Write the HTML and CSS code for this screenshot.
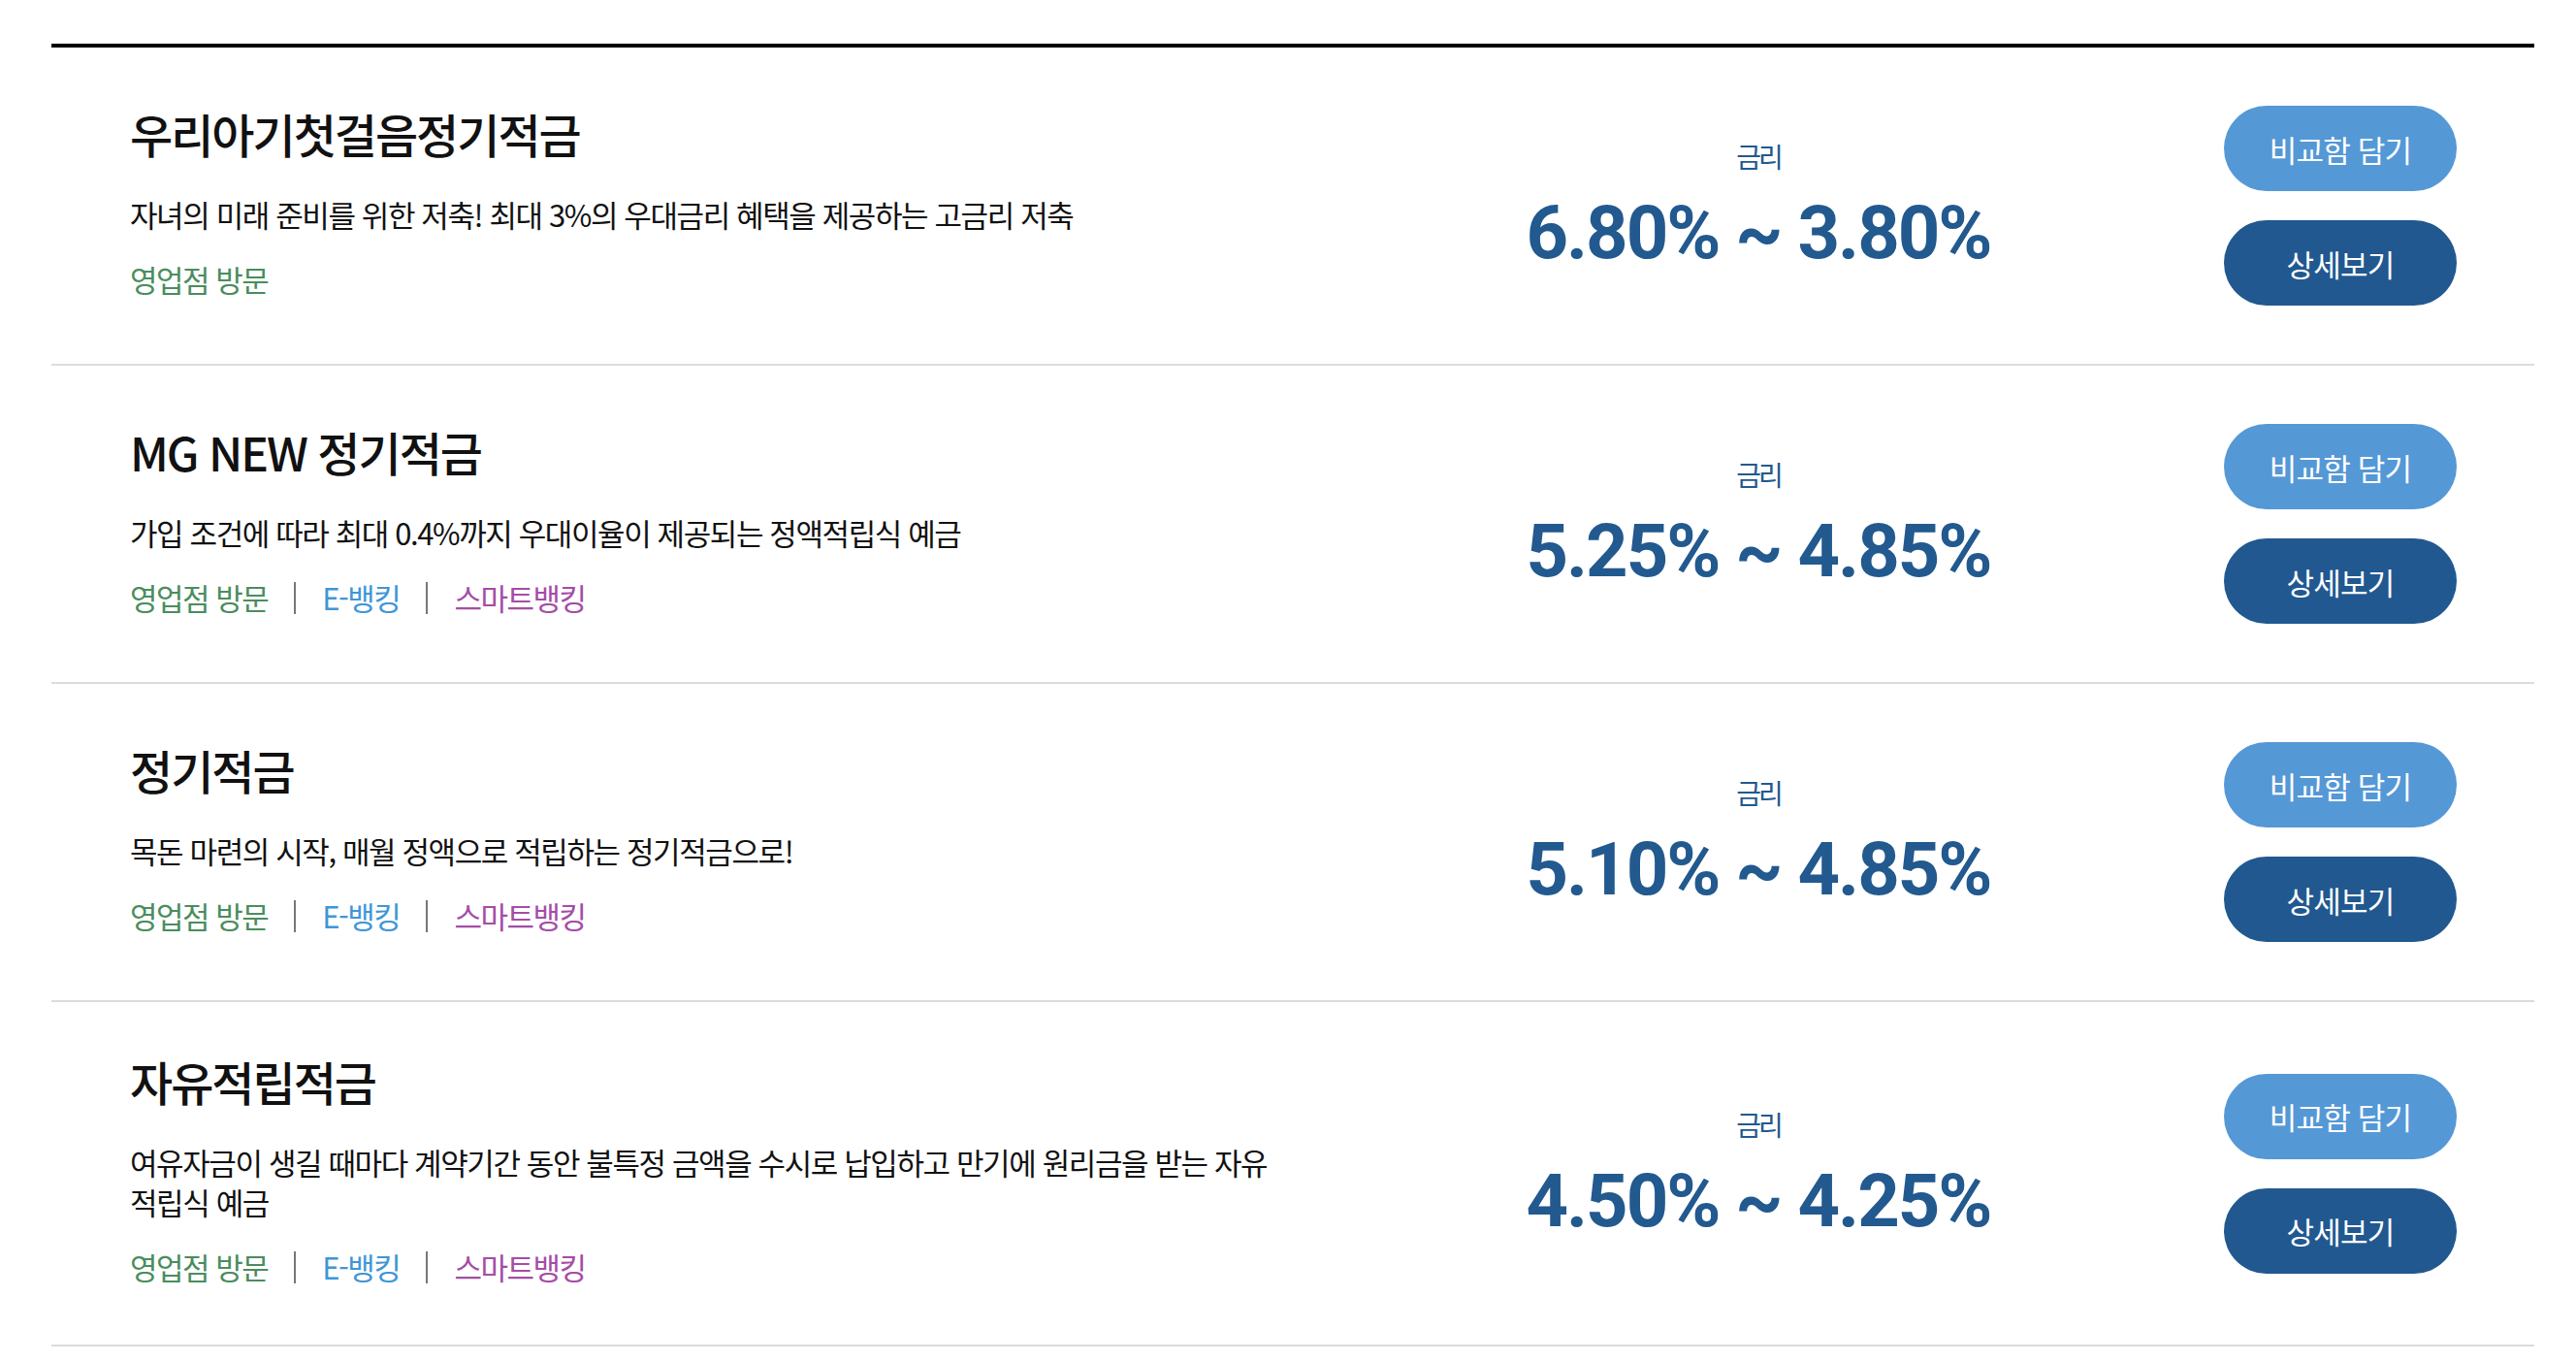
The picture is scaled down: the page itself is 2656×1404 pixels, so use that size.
FILE: index.html
```html
<!DOCTYPE html>
<html lang="ko">
<head>
<meta charset="utf-8">
<title>적금 상품 목록</title>
<link rel="stylesheet" href="styles.css">
</head>
<body>
<div class="list">
  <div class="item">
    <div class="info">
      <h3 class="title">우리아기첫걸음정기적금</h3>
      <p class="desc">자녀의 미래 준비를 위한 저축! 최대 3%의 우대금리 혜택을 제공하는 고금리 저축</p>
      <div class="channels"><span class="ch branch">영업점 방문</span></div>
    </div>
    <div class="rate">
      <div class="rate-label">금리</div>
      <div class="rate-value">6.80% ~ 3.80%</div>
    </div>
    <div class="actions">
      <a class="btn btn-compare">비교함 담기</a>
      <a class="btn btn-detail">상세보기</a>
    </div>
  </div>
  <div class="item">
    <div class="info">
      <h3 class="title">MG NEW 정기적금</h3>
      <p class="desc">가입 조건에 따라 최대 0.4%까지 우대이율이 제공되는 정액적립식 예금</p>
      <div class="channels"><span class="ch branch">영업점 방문</span><span class="sep"></span><span class="ch ebank">E-뱅킹</span><span class="sep"></span><span class="ch smart">스마트뱅킹</span></div>
    </div>
    <div class="rate">
      <div class="rate-label">금리</div>
      <div class="rate-value">5.25% ~ 4.85%</div>
    </div>
    <div class="actions">
      <a class="btn btn-compare">비교함 담기</a>
      <a class="btn btn-detail">상세보기</a>
    </div>
  </div>
  <div class="item">
    <div class="info">
      <h3 class="title">정기적금</h3>
      <p class="desc">목돈 마련의 시작, 매월 정액으로 적립하는 정기적금으로!</p>
      <div class="channels"><span class="ch branch">영업점 방문</span><span class="sep"></span><span class="ch ebank">E-뱅킹</span><span class="sep"></span><span class="ch smart">스마트뱅킹</span></div>
    </div>
    <div class="rate">
      <div class="rate-label">금리</div>
      <div class="rate-value">5.10% ~ 4.85%</div>
    </div>
    <div class="actions">
      <a class="btn btn-compare">비교함 담기</a>
      <a class="btn btn-detail">상세보기</a>
    </div>
  </div>
  <div class="item">
    <div class="info">
      <h3 class="title">자유적립적금</h3>
      <p class="desc">여유자금이 생길 때마다 계약기간 동안 불특정 금액을 수시로 납입하고 만기에 원리금을 받는 자유 적립식 예금</p>
      <div class="channels"><span class="ch branch">영업점 방문</span><span class="sep"></span><span class="ch ebank">E-뱅킹</span><span class="sep"></span><span class="ch smart">스마트뱅킹</span></div>
    </div>
    <div class="rate">
      <div class="rate-label">금리</div>
      <div class="rate-value">4.50% ~ 4.25%</div>
    </div>
    <div class="actions">
      <a class="btn btn-compare">비교함 담기</a>
      <a class="btn btn-detail">상세보기</a>
    </div>
  </div>
</div>
</body>
</html>
```
FILE: styles.css
```css
* { box-sizing: border-box; }
html, body { margin: 0; padding: 0; background: #fff; }
body {
  font-family: "Noto Sans CJK KR", "Noto Sans", sans-serif;
  color: #111;
  padding-top: 45px;
}
.list {
  width: 2560px;
  margin-left: 53px;
  border-top: 4px solid #000;
}
.item {
  display: flex;
  align-items: center;
  padding: 60px 80px 60px 81px;
  border-bottom: 2px solid #dcdcdc;
}
.info {
  flex: 1;
  min-width: 0;
}
.title {
  margin: 0;
  font-size: 48px;
  line-height: 42px;
  font-weight: 500;
  letter-spacing: -2px;
  color: #111;
}
.desc {
  margin: 42px 0 0;
  max-width: 1200px;
  font-size: 31px;
  line-height: 41px;
  letter-spacing: -1.4px;
  color: #111;
}
.channels {
  margin-top: 27px;
  display: flex;
  align-items: center;
  height: 40px;
  font-size: 31px;
  line-height: 40px;
  letter-spacing: -1.5px;
}
.branch { color: #4a8d5d; }
.ebank { color: #3f96d6; }
.smart { color: #a54ca7; }
.sep {
  width: 2px;
  height: 33px;
  background: #777;
  margin: 0 27px;
}
.rate {
  width: 600px;
  margin-right: 180px;
  text-align: center;
  color: #22598f;
}
.rate-label {
  font-size: 28px;
  line-height: 34px;
  letter-spacing: -3px;
}
.rate-value {
  margin-top: 22px;
  font-family: Roboto, "Noto Sans", sans-serif;
  font-weight: 700;
  font-size: 76px;
  line-height: 80px;
  letter-spacing: -2px;
}
.actions {
  width: 240px;
  display: flex;
  flex-direction: column;
  gap: 30px;
}
.btn {
  display: flex;
  align-items: center;
  justify-content: center;
  height: 88px;
  border-radius: 44px;
  color: #fff;
  font-size: 31px;
  letter-spacing: -0.8px;
  text-decoration: none;
}
.btn-compare { background: #5598d6; }
.btn-detail { background: #215890; }
```
